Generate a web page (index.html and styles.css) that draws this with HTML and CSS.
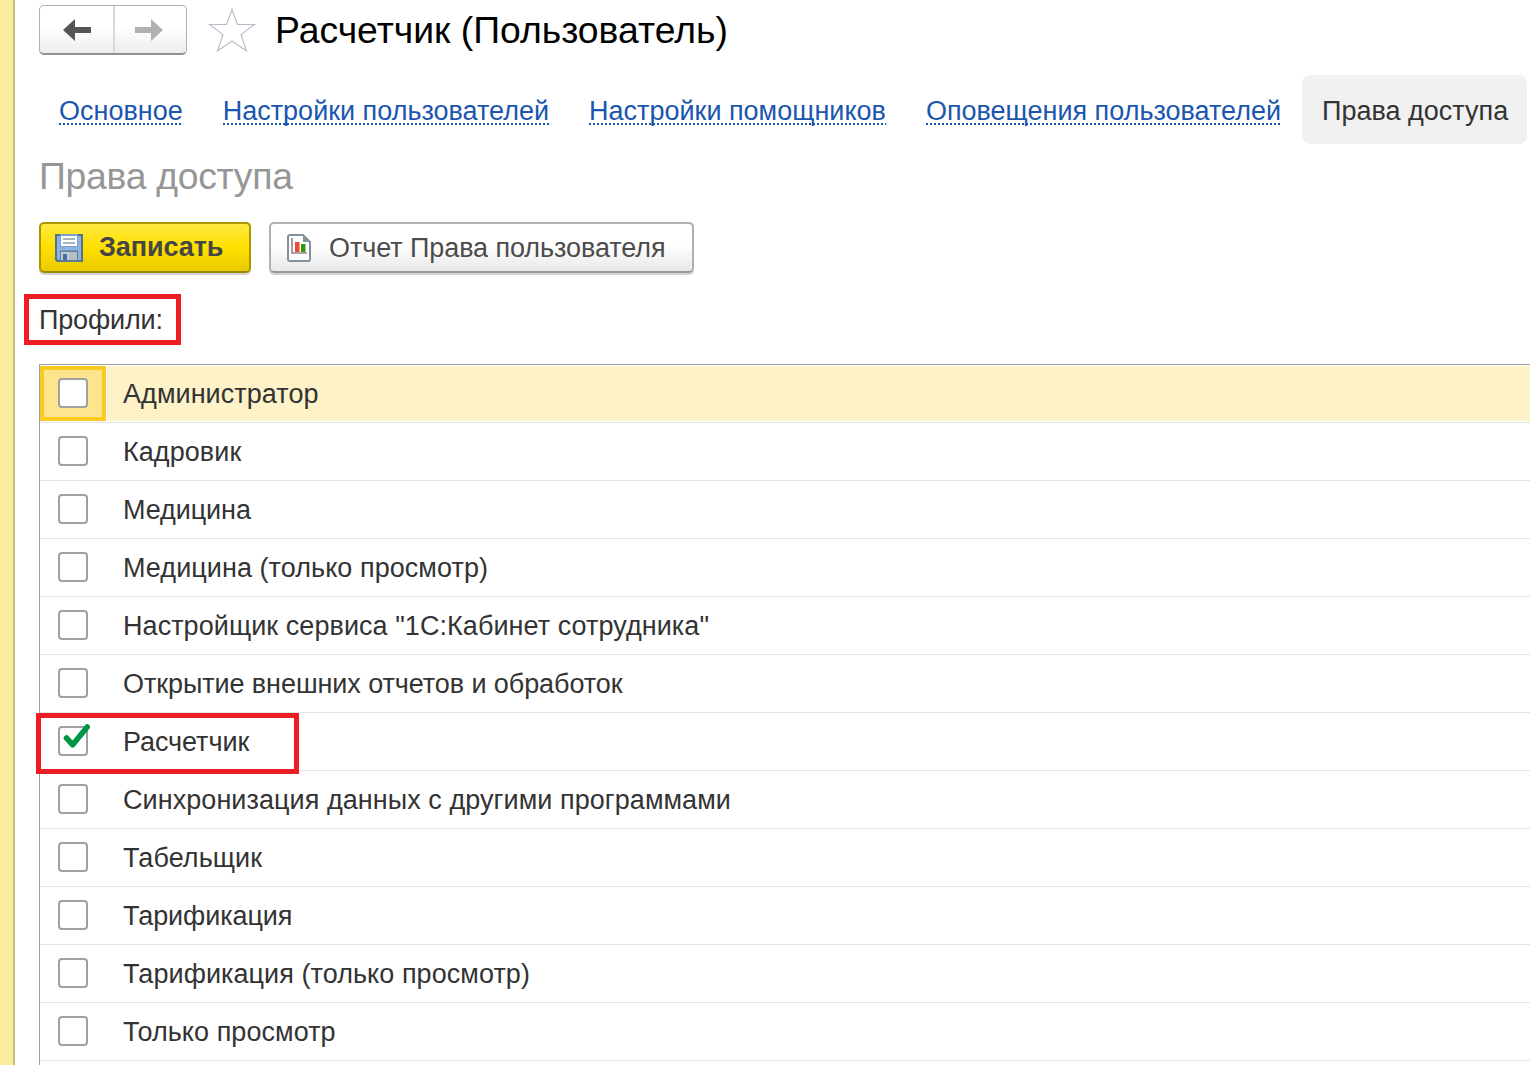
FILE: index.html
```html
<!DOCTYPE html>
<html lang="ru">
<head>
<meta charset="utf-8">
<title>Расчетчик (Пользователь)</title>
<link rel="stylesheet" href="styles.css">
</head>
<body>
<div class="app">
  <aside class="edge"></aside>
  <main class="form">
    <header class="header">
      <div class="history">
        <button class="history-btn" aria-label="Назад"><svg width="28" height="22" viewBox="0 0 28 22"><path d="M0 11 12 0v8h16v6H12v8z" fill="#555"/></svg></button>
        <button class="history-btn" aria-label="Вперед"><svg width="28" height="22" viewBox="0 0 28 22"><path d="M28 11 16 0v8H0v6h16v8z" fill="#b0b0b0"/></svg></button>
      </div>
      <svg class="star" width="48" height="46" viewBox="0 0 48 46"><path d="M24 2.200 29.400 17.500H46.500L33 27.600 38.600 44 24 34 9.400 44 15 27.600 1.500 17.500H18.600z" fill="none" stroke="#b4bcc5" stroke-width="1.1"/></svg>
      <h1 class="title">Расчетчик (Пользователь)</h1>
    </header>
    <nav class="tabs">
      <a class="tab"><span class="link">Основное</span></a>
      <a class="tab"><span class="link">Настройки пользователей</span></a>
      <a class="tab"><span class="link">Настройки помощников</span></a>
      <a class="tab"><span class="link">Оповещения пользователей</span></a>
      <a class="tab active">Права доступа</a>
    </nav>
    <h2 class="subtitle">Права доступа</h2>
    <div class="toolbar">
      <button class="btn primary">
        <svg width="28" height="28" viewBox="0 0 28 28"><path d="M0 0h28v28H2l-2-2z" fill="#54738a"/><path d="M2 2h24v24H3l-1-1z" fill="#8bb2e0"/><path d="M5 0h18v13H5z" fill="#7a9fc8"/><path d="M6 2h16v10H6z" fill="#fff"/><path d="M8 4h12v2H8zm0 4h12v2H8z" fill="#a4b4c3"/><path d="M5 16.500h18v11H5z" fill="#607f98"/><path d="M6 18h16v8H6z" fill="#c4cbd0"/><path d="M14 18h8v8h-8z" fill="#b5bdc3"/><path d="M8 20h4v6H8z" fill="#3d70ae"/></svg>
        <span>Записать</span>
      </button>
      <button class="btn report">
        <svg width="26" height="28" viewBox="0 0 26 28"><path d="M3 1h13l7 7v17a2 2 0 0 1-2 2H3a2 2 0 0 1-2-2V3a2 2 0 0 1 2-2z" fill="#fff" stroke="#82919c" stroke-width="2"/><path d="M16 1v7h8z" fill="#82919c"/><path d="M5 4v15h15" fill="none" stroke="#8d8585" stroke-width="1.6"/><path d="M8 8h4.500v10H8z" fill="#f14a32"/><path d="M14 10h4.500v8H14z" fill="#32990c"/></svg>
        <span>Отчет Права пользователя</span>
      </button>
    </div>
    <div class="caption">Профили:</div>
    <div class="list">
      <div class="row selected"><div class="cell"><i class="box"></i></div><div class="name">Администратор</div></div>
      <div class="row"><div class="cell"><i class="box"></i></div><div class="name">Кадровик</div></div>
      <div class="row"><div class="cell"><i class="box"></i></div><div class="name tight">Медицина</div></div>
      <div class="row"><div class="cell"><i class="box"></i></div><div class="name">Медицина (только просмотр)</div></div>
      <div class="row"><div class="cell"><i class="box"></i></div><div class="name">Настройщик сервиса "1С:Кабинет сотрудника"</div></div>
      <div class="row"><div class="cell"><i class="box"></i></div><div class="name tight">Открытие внешних отчетов и обработок</div></div>
      <div class="row marked"><div class="cell"><i class="box"><svg class="check" width="30" height="28" viewBox="0 0 30 28"><path d="M4.500 15 10.700 21.800 25.200 4" fill="none" stroke="#009646" stroke-width="5.600" stroke-linecap="round" stroke-linejoin="round"/></svg></i></div><div class="name tight">Расчетчик</div></div>
      <div class="row"><div class="cell"><i class="box"></i></div><div class="name">Синхронизация данных с другими программами</div></div>
      <div class="row"><div class="cell"><i class="box"></i></div><div class="name">Табельщик</div></div>
      <div class="row"><div class="cell"><i class="box"></i></div><div class="name tight">Тарификация</div></div>
      <div class="row"><div class="cell"><i class="box"></i></div><div class="name">Тарификация (только просмотр)</div></div>
      <div class="row"><div class="cell"><i class="box"></i></div><div class="name">Только просмотр</div></div>
      <div class="row"></div>
    </div>
  </main>
</div>
</body>
</html>
```
FILE: styles.css
```css
*, *::after { box-sizing: border-box; }
body {
  margin: 0;
  background: #fff;
  color: #333;
  font: 27px/32px "Liberation Sans", Arial, sans-serif;
}
h1, h2 { margin: 0; font-weight: 400; }
button { font: inherit; padding: 0; cursor: pointer; }
.app { display: flex; height: 1065px; overflow: hidden; }
.edge { width: 15px; flex: none; background: #fbeb9e; border-right: 2px solid #c8be7c; }
.form { flex: 1; min-width: 0; padding: 5px 0 0 24px; white-space: nowrap; }

.header { display: flex; height: 50px; }
.history {
  display: flex;
  width: 148px;
  height: 50px;
  border: 1px solid #b0b0b0;
  border-bottom: 2px solid #929292;
  border-radius: 5px;
  background: linear-gradient(#fff 45%, #ededed);
}
.history-btn {
  flex: 1;
  display: flex;
  align-items: center;
  justify-content: center;
  border: 0;
  background: none;
}
.history-btn + .history-btn { border-left: 2px solid #d9d9d9; }
.history-btn:first-child { flex: 0 0 73px; padding-left: 1px; }
.history-btn:last-child { padding-right: 3px; }
.star { margin: 2px 0 0 21px; }
.title { margin-left: 19px; color: #000; font-size: 37.33px; line-height: 50px; }

.tabs { display: flex; height: 69px; margin-top: 20px; }
.tab { padding: 20px 20px 0; line-height: 32px; }
.link {
  display: block;
  height: 30px;
  color: #1a56b0;
  background: repeating-linear-gradient(90deg, #1a56b0 0 2px, transparent 2px 4px) 0 100% / 100% 2px no-repeat;
}
.active { width: 225px; margin-left: 1px; background: #f1f1f1; border-radius: 8px; }

.subtitle {
  margin-top: 7px;
  color: #969696;
  font-size: 37.33px;
  line-height: 50px;
  letter-spacing: -0.28px;
}

.toolbar { display: flex; gap: 18px; margin-top: 21px; }
.btn {
  display: flex;
  align-items: center;
  height: 51px;
  padding-left: 16px;
  border: 2px solid #b0b0b0;
  border-bottom-color: #999;
  border-radius: 5px;
  background: linear-gradient(#fff 45%, #e8e8e8);
  box-shadow: 0 2px 0 #d2d2d2;
  color: #4c4c4c;
}
.btn span { margin-left: 16px; letter-spacing: -0.08px; }
.primary {
  width: 212px;
  padding-left: 14px;
  border-color: #ab9600;
  border-bottom-color: #9b8700;
  background: linear-gradient(#ffe840, #ffe000 50%, #e9cb00);
  color: #454545;
  font-weight: 700;
}
.primary span { padding-bottom: 2px; }
.report { width: 425px; }

.caption {
  width: 157px;
  height: 51px;
  margin: 21px 0 0 -15px;
  padding: 5px 0 0 10px;
  border: 5px solid #ee1c23;
  letter-spacing: -0.15px;
}

.list { margin-top: 19px; border: solid #a0a0a0; border-width: 1px 0 0 1px; }
.row { position: relative; display: flex; height: 58px; border-bottom: 1px solid #e4e4e4; }
.cell { width: 66px; padding: 13px 0 0 18px; }
.name { flex: 1; margin-left: 1px; padding: 13px 0 0 16px; letter-spacing: 0.06px; }
.tight { letter-spacing: -0.08px; }
.box {
  position: relative;
  display: block;
  width: 30px;
  height: 30px;
  border: 2px solid #a0a0a0;
  border-radius: 4px;
  background: #fff;
}
.selected { padding: 1px 0; }
.selected .cell { padding: 8px 0 0 14px; border: 4px solid #f9ca20; background: #fee48c; }
.selected .name { padding-top: 12px; background: #fef2c8; }
.check { position: absolute; left: 2px; top: -5px; }
/* highlight frame laid over the row lines */
.marked::after {
  content: "";
  position: absolute;
  left: -4px;
  top: 0;
  width: 263px;
  height: 61px;
  border: 5px solid #ee1c23;
  z-index: 1;
}
```
